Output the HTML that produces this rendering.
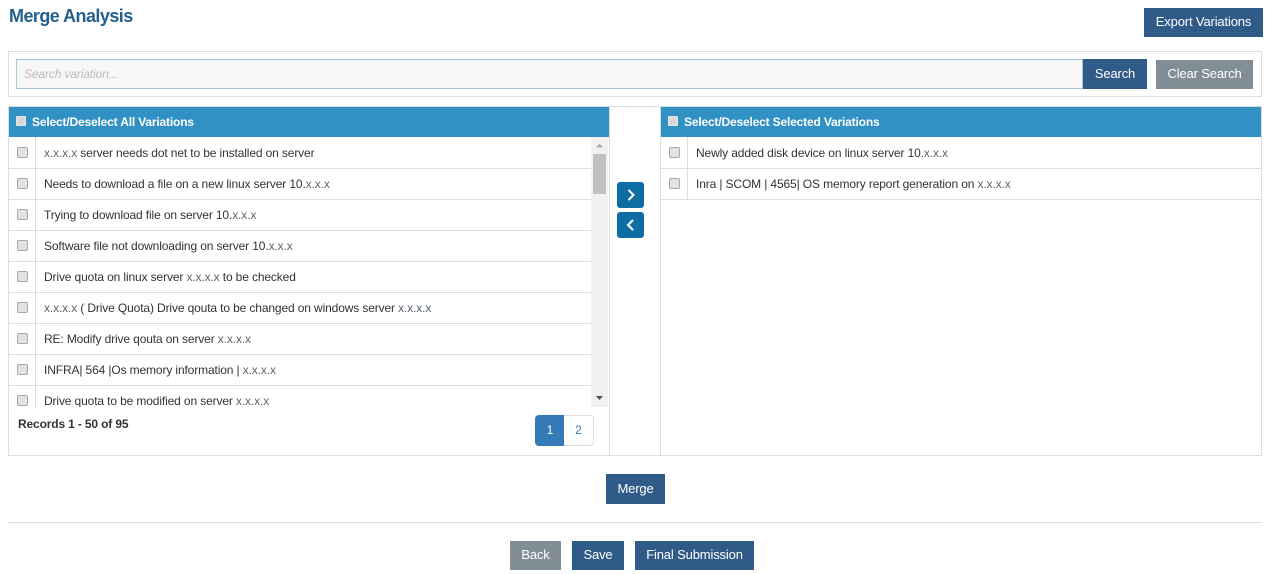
<!DOCTYPE html>
<html>
<head>
<meta charset="utf-8">
<style>
html,body{margin:0;padding:0;background:#fff;}
body{width:1271px;height:574px;position:relative;overflow:hidden;font-family:"Liberation Sans",Arial,sans-serif;font-size:12px;color:#333;}
div,a{position:absolute;box-sizing:border-box;}
.btn{background:#305a87;color:#fff;font-size:13px;letter-spacing:-.15px;line-height:1;display:flex;align-items:center;justify-content:center;white-space:nowrap;padding-bottom:2px;}
.gray{background:#818e96;}
.hd{background:#3191c4;height:30px;color:#fff;font-weight:bold;font-size:12px;letter-spacing:-.17px;line-height:30px;white-space:nowrap;}
.hcb{position:absolute;box-sizing:border-box;width:10px;height:10px;background:#d8d8d8;border:1px solid #e8e8e8;border-radius:1px;top:9px;}
.row{height:31px;border-bottom:1px solid #ddd;white-space:nowrap;line-height:30px;font-size:12px;letter-spacing:-.13px;color:#333;}
.row .sep{left:26px;top:-1px;bottom:-1px;width:1px;background:#ddd;}
.row .cb{width:11px;height:11px;border:1px solid #a8a8a8;border-radius:2px;background:#e2e2e2;top:9px;left:8px;}
.row .t{left:35px;top:0;}
.x{color:#5d6770;}
.arrow{background:#0e6ea3;border-radius:3px;width:27px;height:26px;}
</style>
</head>
<body>
<div style="left:9px;top:5px;font-size:18px;letter-spacing:-.55px;font-weight:bold;color:#24608c;line-height:22px;white-space:nowrap;">Merge Analysis</div>
<div class="btn" style="left:1144px;top:8px;width:119px;height:29px;padding-bottom:3px;">Export Variations</div>

<div style="left:8px;top:51px;width:1254px;height:46px;border:1px solid #ddd;"></div>
<div style="left:16px;top:59px;width:1067px;height:30px;background:#f7f7f7;border:1px solid #a9c8d8;font-style:italic;color:#bbb;font-size:12px;letter-spacing:-.13px;line-height:28px;padding-left:7px;">Search variation...</div>
<div class="btn" style="left:1083px;top:59px;width:64px;height:30px;">Search</div>
<div class="btn gray" style="left:1156px;top:60px;width:97px;height:29px;">Clear Search</div>

<!-- outer panel -->
<div style="left:8px;top:106px;width:1254px;height:350px;border:1px solid #ddd;"></div>
<div style="left:609px;top:107px;width:1px;height:349px;background:#ddd;"></div>
<div style="left:660px;top:107px;width:1px;height:349px;background:#ddd;"></div>

<!-- left -->
<div class="hd" style="left:9px;top:107px;width:600px;padding-left:23px;"><span class="hcb" style="left:7px;"></span>Select/Deselect All Variations</div>
<div style="left:9px;top:137px;width:582px;height:270px;overflow:hidden;">
  <div class="row" style="left:0;right:0;top:1px;"><div class="sep"></div><div class="cb"></div><div class="t"><span class="x">x.x.x.x</span> server needs dot net to be installed on server</div></div>
  <div class="row" style="left:0;right:0;top:32px;"><div class="sep"></div><div class="cb"></div><div class="t">Needs to download a file on a new linux server 10.<span class="x">x.x.x</span></div></div>
  <div class="row" style="left:0;right:0;top:63px;"><div class="sep"></div><div class="cb"></div><div class="t">Trying to download file on server 10.<span class="x">x.x.x</span></div></div>
  <div class="row" style="left:0;right:0;top:94px;"><div class="sep"></div><div class="cb"></div><div class="t">Software file not downloading on server 10.<span class="x">x.x.x</span></div></div>
  <div class="row" style="left:0;right:0;top:125px;"><div class="sep"></div><div class="cb"></div><div class="t">Drive quota on linux server <span class="x">x.x.x.x</span> to be checked</div></div>
  <div class="row" style="left:0;right:0;top:156px;"><div class="sep"></div><div class="cb"></div><div class="t"><span class="x">x.x.x.x</span> ( Drive Quota) Drive qouta to be changed on windows server <span class="x">x.x.x.x</span></div></div>
  <div class="row" style="left:0;right:0;top:187px;"><div class="sep"></div><div class="cb"></div><div class="t">RE: Modify drive qouta on server <span class="x">x.x.x.x</span></div></div>
  <div class="row" style="left:0;right:0;top:218px;"><div class="sep"></div><div class="cb"></div><div class="t">INFRA| 564 |Os memory information | <span class="x">x.x.x.x</span></div></div>
  <div class="row" style="left:0;right:0;top:249px;border-bottom:0;"><div class="sep"></div><div class="cb"></div><div class="t">Drive quota to be modified on server <span class="x">x.x.x.x</span></div></div>
</div>
<!-- scrollbar -->
<div style="left:591px;top:137px;width:17px;height:270px;background:#f1f1f1;"></div>
<div style="left:593px;top:154px;width:13px;height:40px;background:#c1c1c1;"></div>
<svg style="position:absolute;left:591px;top:137px;" width="17" height="270">
<path d="M5 10.5 L12 10.5 L8.5 6.5 Z" fill="#b0b0b0"/>
<path d="M5 259 L12 259 L8.5 263 Z" fill="#505050"/>
</svg>

<div style="left:18px;top:417px;font-weight:bold;font-size:12px;letter-spacing:-.15px;line-height:14px;color:#333;white-space:nowrap;">Records 1 - 50 of 95</div>
<div style="left:535px;top:415px;width:29px;height:31px;background:#337ab7;border-radius:4px 0 0 4px;color:#fff;text-align:center;line-height:31px;font-size:12px;padding-left:1px;">1</div>
<div style="left:564px;top:415px;width:30px;height:31px;background:#fff;border:1px solid #ddd;border-left:0;border-radius:0 4px 4px 0;color:#337ab7;text-align:center;line-height:29px;font-size:12px;">2</div>

<!-- arrows -->
<div class="arrow" style="left:617px;top:182px;"><svg width="27" height="26" style="display:block"><path d="M11.5 8 L16.5 13 L11.5 18" fill="none" stroke="#fff" stroke-width="2"/></svg></div>
<div class="arrow" style="left:617px;top:212px;"><svg width="27" height="26" style="display:block"><path d="M16 8 L11 13 L16 18" fill="none" stroke="#fff" stroke-width="2"/></svg></div>

<!-- right -->
<div class="hd" style="left:661px;top:107px;width:600px;padding-left:23px;"><span class="hcb" style="left:7px;"></span>Select/Deselect Selected Variations</div>
<div style="left:661px;top:137px;width:600px;height:64px;overflow:hidden;">
  <div class="row" style="left:0;right:0;top:1px;"><div class="sep"></div><div class="cb"></div><div class="t">Newly added disk device on linux server 10.<span class="x">x.x.x</span></div></div>
  <div class="row" style="left:0;right:0;top:32px;"><div class="sep"></div><div class="cb"></div><div class="t">Inra | SCOM | 4565| OS memory report generation on <span class="x">x.x.x.x</span></div></div>
</div>

<div class="btn" style="left:606px;top:474px;width:59px;height:30px;">Merge</div>
<div style="left:8px;top:522px;width:1254px;height:1px;background:#ddd;"></div>
<div class="btn gray" style="left:510px;top:541px;width:51px;height:29px;padding-bottom:3px;">Back</div>
<div class="btn" style="left:572px;top:541px;width:52px;height:29px;padding-bottom:3px;">Save</div>
<div class="btn" style="left:635px;top:541px;width:119px;height:29px;padding-bottom:3px;">Final Submission</div>
</body>
</html>
